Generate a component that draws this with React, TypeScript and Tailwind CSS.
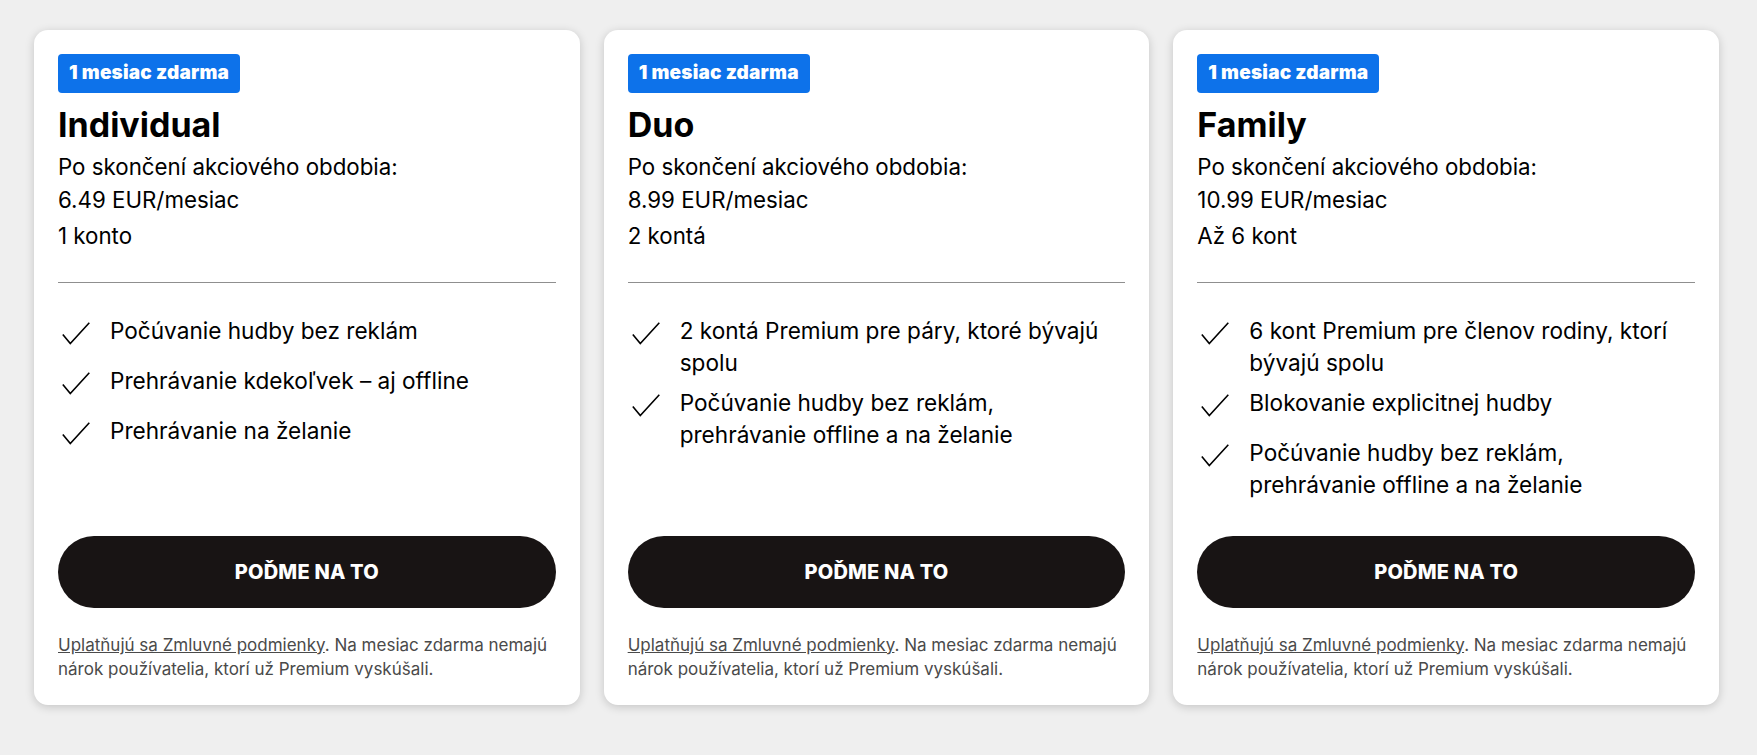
import React from "react"

type Plan = {
  name: string
  price: string
  accounts: string
  features: string[]
}

const plans: Plan[] = [
  {
    name: "Individual",
    price: "6.49 EUR/mesiac",
    accounts: "1 konto",
    features: [
      "Počúvanie hudby bez reklám",
      "Prehrávanie kdekoľvek – aj offline",
      "Prehrávanie na želanie",
    ],
  },
  {
    name: "Duo",
    price: "8.99 EUR/mesiac",
    accounts: "2 kontá",
    features: [
      "2 kontá Premium pre páry, ktoré bývajú spolu",
      "Počúvanie hudby bez reklám, prehrávanie offline a na želanie",
    ],
  },
  {
    name: "Family",
    price: "10.99 EUR/mesiac",
    accounts: "Až 6 kont",
    features: [
      "6 kont Premium pre členov rodiny, ktorí bývajú spolu",
      "Blokovanie explicitnej hudby",
      "Počúvanie hudby bez reklám, prehrávanie offline a na želanie",
    ],
  },
]

function Check() {
  return (
    <svg width="28" height="23" viewBox="0 0 28 23" fill="none" aria-hidden="true">
      <path d="M0.8 12.4 L8.3 21.6 L27.3 0.8" stroke="#000" strokeWidth="1.6" />
    </svg>
  )
}

function PlanCard({ plan }: { plan: Plan }) {
  return (
    <div className="flex flex-col bg-white rounded-[14px] p-6 shadow-[0_2px_10px_rgba(0,0,0,0.18)]">
      <span className="self-start h-[39px] flex items-center px-[11px] rounded-[4px] bg-[#0d72ea] text-white text-[19px] font-black tracking-[0.2px]">
        1 mesiac zdarma
      </span>
      <h3 className="mt-3 text-[34px] leading-[1.2] font-bold text-black">{plan.name}</h3>
      <p className="mt-[4px] text-[22.3px] leading-[33px] text-black">
        Po skončení akciového obdobia:
        <br />
        {plan.price}
      </p>
      <p className="mt-[3px] text-[22.3px] leading-[33px] text-black">{plan.accounts}</p>
      <div className="mt-[30px] h-px bg-[#8f8f8f]" />
      <ul className="mt-[32px] flex-1 flex flex-col gap-2">
        {plan.features.map((f) => (
          <li key={f} className="flex min-h-[42px]">
            <span className="shrink-0 w-[52px] pl-1 pt-[7px]">
              <Check />
            </span>
            <span className="text-[22.6px] leading-[32px] text-black">{f}</span>
          </li>
        ))}
      </ul>
      <button className="mt-[35px] h-[72px] w-full rounded-full bg-[#181414] text-white text-[20px] font-extrabold tracking-[0.2px] uppercase">
        Poďme na to
      </button>
      <p className="mt-[25px] text-[17px] leading-[24px] text-[#4a4a4a]">
        <a href="#" className="underline">
          Uplatňujú sa Zmluvné podmienky
        </a>
        . Na mesiac zdarma nemajú nárok používatelia, ktorí už Premium vyskúšali.
      </p>
    </div>
  )
}

export default function App() {
  return (
    <div
      className="min-h-screen bg-[#efefef] pl-[34px] pr-[38px] pt-[30px] pb-10"
      style={{ fontFamily: "Inter, 'Noto Sans', sans-serif" }}
    >
      <div className="grid grid-cols-3 gap-6">
        {plans.map((p) => (
          <PlanCard key={p.name} plan={p} />
        ))}
      </div>
    </div>
  )
}
